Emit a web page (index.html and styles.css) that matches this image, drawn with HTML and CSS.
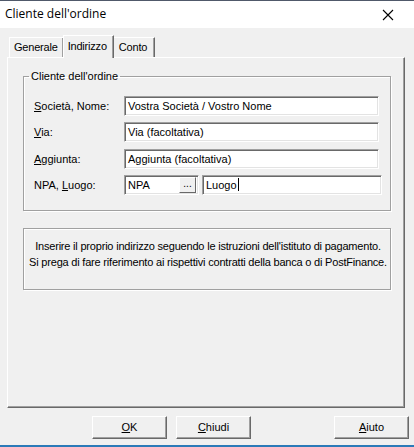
FILE: index.html
```html
<!DOCTYPE html>
<html lang="it">
<head>
<meta charset="utf-8">
<title>Cliente dell'ordine</title>
<link rel="stylesheet" href="styles.css">
</head>
<body>
<div class="window">
  <div class="titlebar">
    <span class="title">Cliente dell'ordine</span>
    <svg class="close" width="12" height="12" viewBox="0 0 12 12"><path d="M1 1 L11 11 M11 1 L1 11" stroke="#000" stroke-width="1.1" fill="none"/></svg>
  </div>
  <div class="content">
    <div class="tabs">
      <div class="tab">Generale</div>
      <div class="tab active">Indirizzo</div>
      <div class="tab last">Conto</div>
    </div>
    <div class="panel">
      <fieldset class="group">
        <legend>Cliente dell'ordine</legend>
        <div class="row">
          <label class="lbl"><u>S</u>ocietà, Nome:</label>
          <div class="field wide">Vostra Società / Vostro Nome</div>
        </div>
        <div class="row">
          <label class="lbl"><u>V</u>ia:</label>
          <div class="field wide">Via (facoltativa)</div>
        </div>
        <div class="row">
          <label class="lbl"><u>A</u>ggiunta:</label>
          <div class="field wide">Aggiunta (facoltativa)</div>
        </div>
        <div class="row">
          <label class="lbl">NPA, <u>L</u>uogo:</label>
          <div class="field npa">NPA<span class="dots">...</span></div>
          <div class="field luogo">Luogo<span class="caret"></span></div>
        </div>
      </fieldset>
      <div class="info">
        <p>Inserire il proprio indirizzo seguendo le istruzioni dell'istituto di pagamento.</p>
        <p>Si prega di fare riferimento ai rispettivi contratti della banca o di PostFinance.</p>
      </div>
    </div>
    <div class="buttons">
      <div class="btn"><u>O</u>K</div>
      <div class="btn"><u>C</u>hiudi</div>
      <div class="spacer"></div>
      <div class="btn"><u>A</u>iuto</div>
    </div>
  </div>
  <div class="bottomline"></div>
</div>
</body>
</html>
```
FILE: styles.css
```css
html, body {
  margin: 0;
  padding: 0;
  background: #f0f0f0;
}
body {
  font-family: "Liberation Sans", Arial, sans-serif;
  font-size: 11px;
  color: #000;
}
.window {
  width: 414px;
  height: 447px;
  display: flex;
  flex-direction: column;
  overflow: hidden;
}
.titlebar {
  height: 27px;
  border-top: 1px solid #50596a;
  background: #fff;
  display: flex;
  align-items: center;
  justify-content: space-between;
  padding: 0 20px 0 5px;
  flex: none;
}
.title {
  font-family: "Open Sans", "Noto Sans", sans-serif;
  font-size: 12px;
  position: relative;
  top: -1px;
}
.content {
  flex: 1;
  display: flex;
  flex-direction: column;
  padding: 0 0 0 7px;
}
.tabs {
  display: flex;
  align-items: flex-end;
  height: 29px;
  padding-left: 2px;
  position: relative;
  z-index: 2;
  letter-spacing: -0.2px;
}
.tab {
  height: 19px;
  line-height: 18px;
  padding: 0 5px 0 4px;
  border-top: 1px solid #fff;
  border-left: 1px solid #fff;
  border-right: 1px solid #696969;
  box-shadow: inset -1px 0 0 #a0a0a0;
}
.tab.active {
  height: 22px;
  line-height: 20px;
  padding: 0 6px 0 4px;
  margin-left: -1px;
  margin-right: -2px;
  background: #f0f0f0;
  margin-bottom: -1px;
  position: relative;
}
.tab.last {
  padding: 0 7px 0 6px;
}
.panel {
  width: 398px;
  height: 351px;
  box-sizing: border-box;
  border-top: 1px solid #fff;
  border-left: 1px solid #fff;
  border-right: 1px solid #696969;
  border-bottom: 1px solid #696969;
  box-shadow: inset -1px -1px 0 #a0a0a0;
  padding: 12px 0 0 15px;
  position: relative;
  z-index: 1;
}
.group {
  margin: 0;
  width: 368px;
  height: 141px;
  box-sizing: border-box;
  border: 1px solid #a0a0a0;
  box-shadow: inset 1px 1px 0 #fff, 1px 1px 0 #fff;
  padding: 11px 0 0 10px;
}
.group legend {
  padding: 0 2px;
  margin-left: -5px;
  line-height: 12px;
}
.row {
  display: flex;
  align-items: center;
  height: 26.3px;
}
.lbl {
  width: 90px;
  flex: none;
}
.field {
  box-sizing: border-box;
  height: 20px;
  background: #fff;
  border-top: 1px solid #a0a0a0;
  border-left: 1px solid #a0a0a0;
  border-right: 1px solid #fff;
  border-bottom: 1px solid #fff;
  box-shadow: inset 1px 1px 0 #696969, inset -1px -1px 0 #e3e3e3;
  padding: 0 3px;
  line-height: 18px;
  white-space: nowrap;
  overflow: hidden;
}
.wide {
  width: 255px;
}
.npa {
  width: 75px;
  padding-right: 0;
  display: flex;
  justify-content: space-between;
}
.dots {
  width: 17px;
  height: 16px;
  margin-top: 1px;
  margin-right: 2px;
  box-sizing: border-box;
  background: #f0f0f0;
  border-top: 1px solid #fff;
  border-left: 1px solid #fff;
  border-right: 1px solid #696969;
  border-bottom: 1px solid #696969;
  line-height: 11px;
  text-align: center;
  font-size: 10px;
}
.luogo {
  width: 180px;
  margin-left: 3px;
}
.caret {
  display: inline-block;
  width: 1px;
  height: 13px;
  background: #000;
  vertical-align: -2px;
  margin-left: 1px;
}
.info {
  margin-top: 17px;
  width: 368px;
  height: 62px;
  box-sizing: border-box;
  border: 1px solid #a0a0a0;
  box-shadow: inset 1px 1px 0 #fff, 1px 1px 0 #fff;
  display: flex;
  flex-direction: column;
  align-items: center;
  padding: 9px 0 0 2px;
  letter-spacing: -0.2px;
}
.info p {
  margin: 0;
  line-height: 16px;
  white-space: nowrap;
}
.buttons {
  display: flex;
  padding: 8px 0 0 85px;
}
.btn {
  width: 75px;
  height: 23px;
  box-sizing: border-box;
  border-top: 1px solid #fff;
  border-left: 1px solid #fff;
  border-right: 1px solid #696969;
  border-bottom: 1px solid #696969;
  box-shadow: inset -1px -1px 0 #a0a0a0;
  text-align: center;
  line-height: 20px;
  margin-right: 9px;
}
.spacer {
  flex: 1;
}
.buttons .btn:last-child {
  margin-right: 5px;
}
.bottomline {
  height: 2px;
  background: #2b7ab8;
  flex: none;
}
```
